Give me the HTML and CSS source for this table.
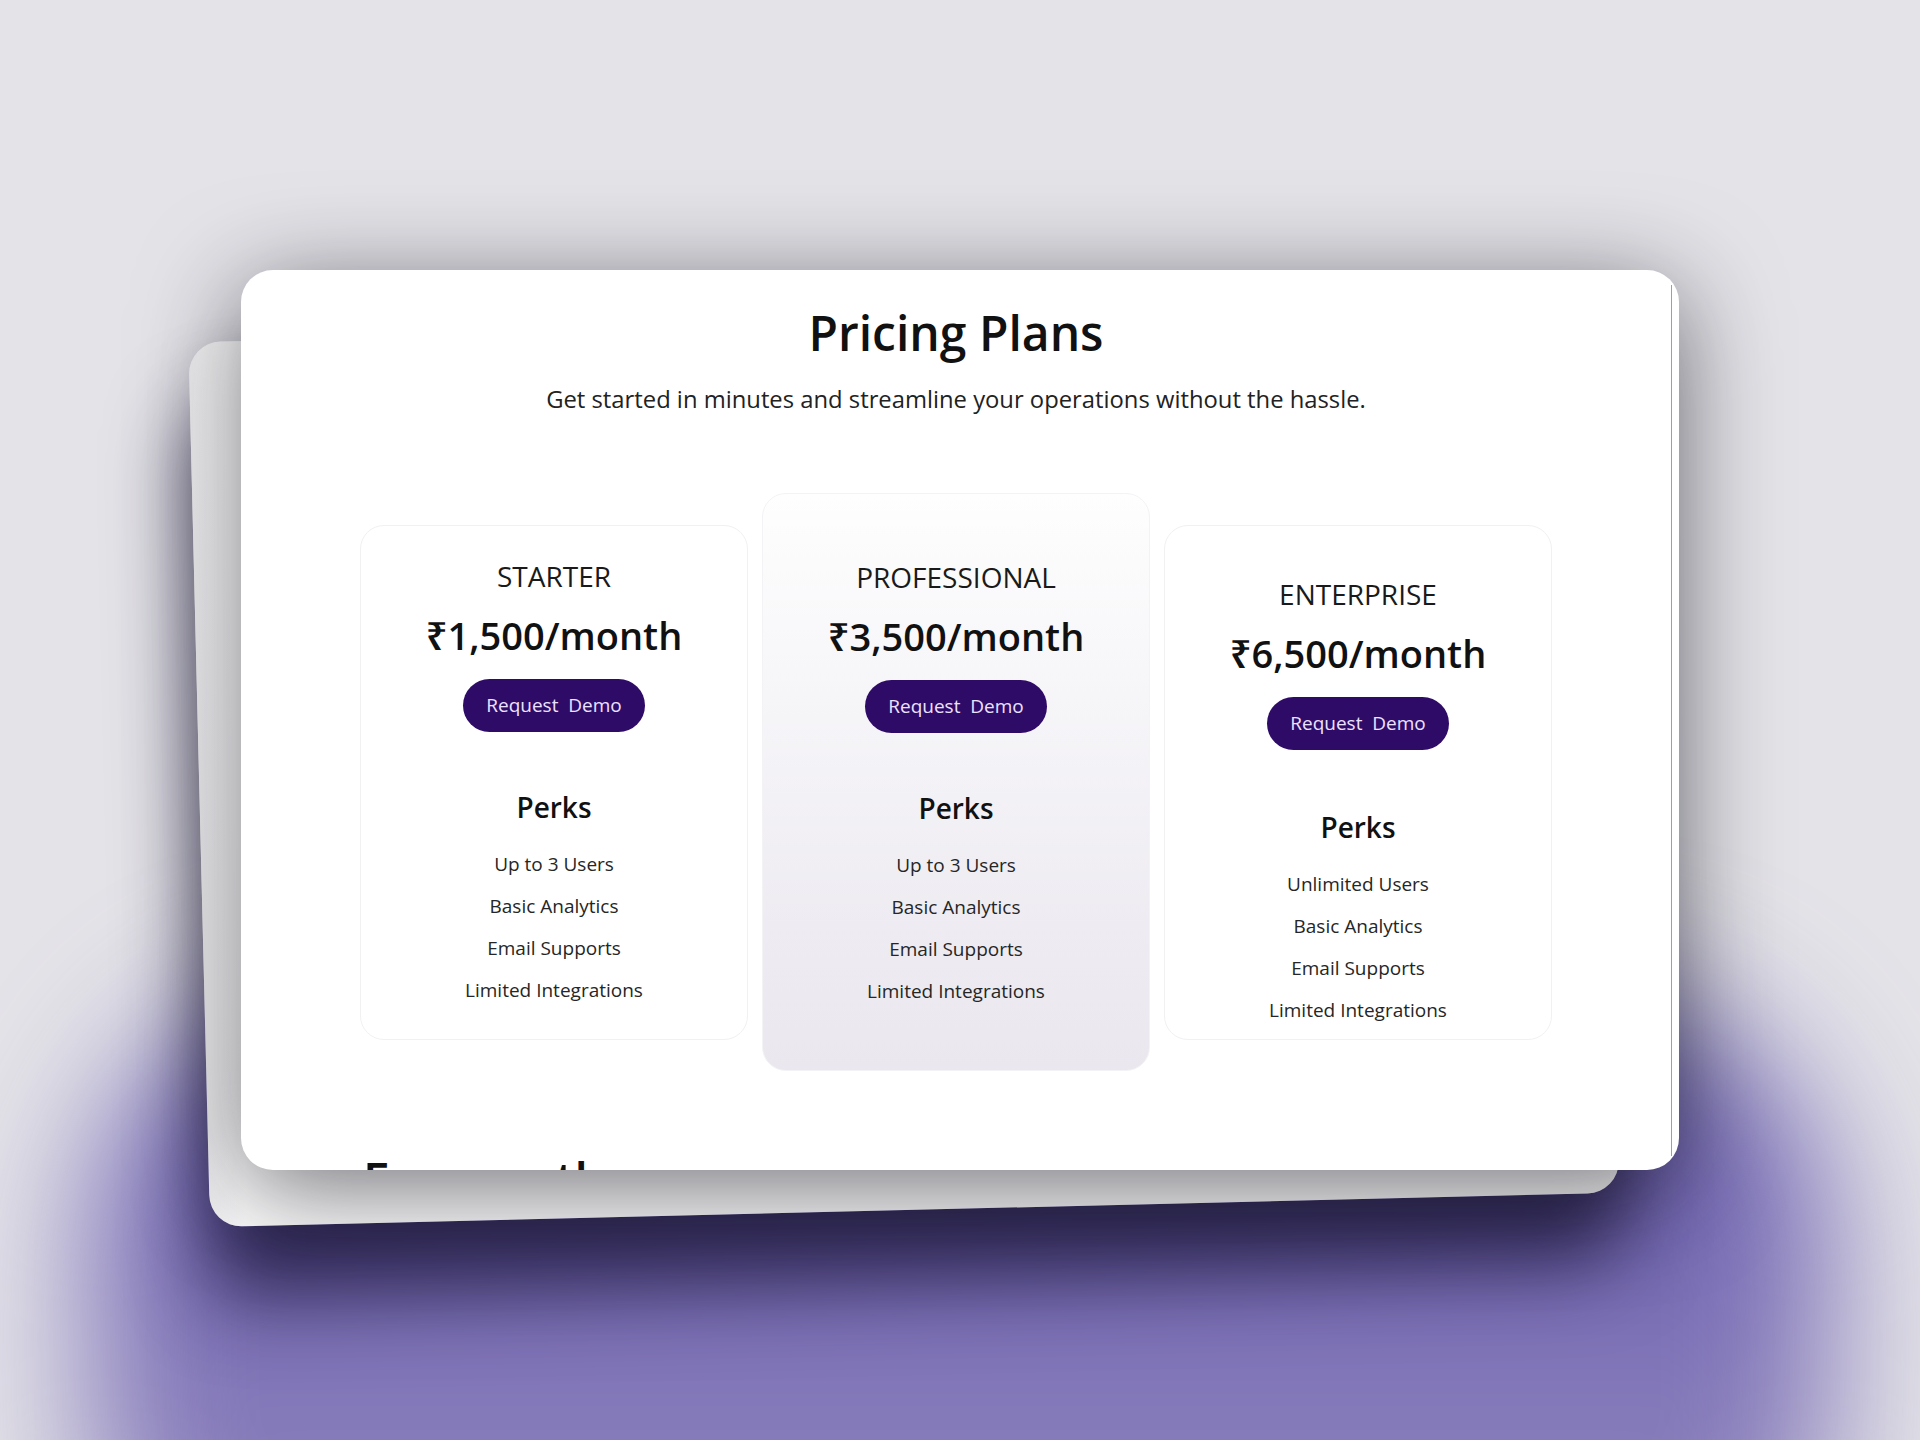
FILE: index.html
```html
<!DOCTYPE html>
<html lang="en">
<head>
<meta charset="utf-8">
<title>Pricing Plans</title>
<link rel="stylesheet" href="styles.css">
</head>
<body>
<div class="stage">
  <div class="glow"></div>
  <div class="deck">
    <div class="sheet sheet-back"></div>
    <div class="sheet sheet-front">
      <div class="sheet-content">
        <h1 class="title">Pricing Plans</h1>
        <p class="subtitle">Get started in minutes and streamline your operations without the hassle.</p>
        <div class="plans">
          <div class="plan plan-starter">
            <h3 class="plan-name">STARTER</h3>
            <div class="plan-price">₹1,500/month</div>
            <button class="plan-btn">Request&nbsp; Demo</button>
            <h4 class="perks-title">Perks</h4>
            <ul class="perks">
              <li>Up to 3 Users</li>
              <li>Basic Analytics</li>
              <li>Email Supports</li>
              <li>Limited Integrations</li>
            </ul>
          </div>
          <div class="plan plan-pro">
            <h3 class="plan-name">PROFESSIONAL</h3>
            <div class="plan-price">₹3,500/month</div>
            <button class="plan-btn">Request&nbsp; Demo</button>
            <h4 class="perks-title">Perks</h4>
            <ul class="perks">
              <li>Up to 3 Users</li>
              <li>Basic Analytics</li>
              <li>Email Supports</li>
              <li>Limited Integrations</li>
            </ul>
          </div>
          <div class="plan plan-enterprise">
            <h3 class="plan-name">ENTERPRISE</h3>
            <div class="plan-price">₹6,500/month</div>
            <button class="plan-btn">Request&nbsp; Demo</button>
            <h4 class="perks-title">Perks</h4>
            <ul class="perks">
              <li>Unlimited Users</li>
              <li>Basic Analytics</li>
              <li>Email Supports</li>
              <li>Limited Integrations</li>
            </ul>
          </div>
        </div>
        <div class="faq">
          <h2 class="faq-title">Frequently Asked Questions</h2>
        </div>
      </div>
      <div class="scrollbar"></div>
    </div>
  </div>
</div>
</body>
</html>
```

FILE: styles.css
```css
* { box-sizing: border-box; }

html, body {
  margin: 0;
  padding: 0;
}

body {
  background: #e4e3e8;
  font-family: "Open Sans", "Noto Sans", "Liberation Sans", sans-serif;
  color: #111;
}

.stage {
  position: relative;
  width: 1920px;
  height: 1440px;
  overflow: hidden;
  padding: 270px 241px 0 241px;
}

.glow {
  position: absolute;
  left: 90px;
  right: 90px;
  top: 990px;
  height: 700px;
  border-radius: 260px;
  background: linear-gradient(180deg, #665cac 0%, #7266b3 30%, #857ab9 60%, #948ac2 100%);
  filter: blur(70px);
  z-index: 0;
}

.deck {
  position: relative;
  z-index: 1;
  display: grid;
  grid-template-columns: 1fr;
}

.sheet {
  grid-row: 1;
  grid-column: 1;
  border-radius: 32px;
}

.sheet-back {
  z-index: 1;
  align-self: start;
  width: 1410px;
  height: 885px;
  background: linear-gradient(90deg, #f1f1f3 0px, #ffffff 36px);
  transform: translate(-42px, 55px) rotate(-1.4deg);
  box-shadow: 0 70px 80px rgba(25, 20, 55, 0.75), 0 10px 50px rgba(20, 20, 30, 0.12);
}

.sheet-front {
  position: relative;
  z-index: 2;
  height: 900px;
  background: #ffffff;
  display: flex;
  overflow: hidden;
  box-shadow: 0 20px 100px rgba(20, 20, 30, 0.6);
}

.sheet-content {
  flex: 1;
  height: 100%;
  overflow: hidden;
  padding-top: 30px;
  text-align: center;
}

.scrollbar {
  width: 8px;
  margin: 15px 0 14px 0;
  border-left: 1px solid #62b1e6;
}

.title {
  margin: 0;
  font-size: 48px;
  line-height: 65px;
  font-weight: 600;
  color: #111;
}

.subtitle {
  margin: 18px 0 0 0;
  font-size: 23.8px;
  line-height: 32px;
  color: #222;
}

.plans {
  margin-top: 78px;
  display: flex;
  justify-content: center;
  align-items: center;
  gap: 14px;
}

.plan {
  width: 388px;
  border: 1px solid #f1f1f3;
  border-radius: 24px;
  background: #ffffff;
  padding: 31px 10px 28px;
}

.plan-pro {
  padding: 64px 10px 58px;
  background: linear-gradient(180deg, #fefefe 0%, #f6f5f8 35%, #eeecf2 75%, #eae8ee 100%);
  border-color: #f3f2f5;
}

.plan-enterprise {
  padding: 49px 10px 8px;
}

.plan-name {
  margin: 0;
  font-size: 28px;
  line-height: 38px;
  font-weight: 400;
  color: #1a1a1a;
}

.plan-price {
  margin-top: 14px;
  font-size: 38px;
  line-height: 52px;
  font-weight: 600;
  color: #111;
}

.plan-btn {
  margin-top: 18px;
  height: 53px;
  padding: 0 23px;
  border: none;
  border-radius: 27px;
  background: #2f0b68;
  color: #ece2ff;
  font-family: inherit;
  font-size: 19px;
  line-height: 53px;
}

.perks-title {
  margin: 56px 0 0 0;
  font-size: 28px;
  line-height: 38px;
  font-weight: 600;
  color: #111;
}

.plan-enterprise .perks-title {
  margin-top: 58px;
}

.perks {
  list-style: none;
  margin: 17px 0 0 0;
  padding: 0;
  font-size: 19px;
  line-height: 42px;
  color: #262626;
}

.faq {
  margin: 76px 0 0 122px;
  width: 320px;
  text-align: left;
}

.faq-title {
  margin: 0;
  font-size: 48px;
  line-height: 65px;
  font-weight: 600;
  color: #111;
}
```
